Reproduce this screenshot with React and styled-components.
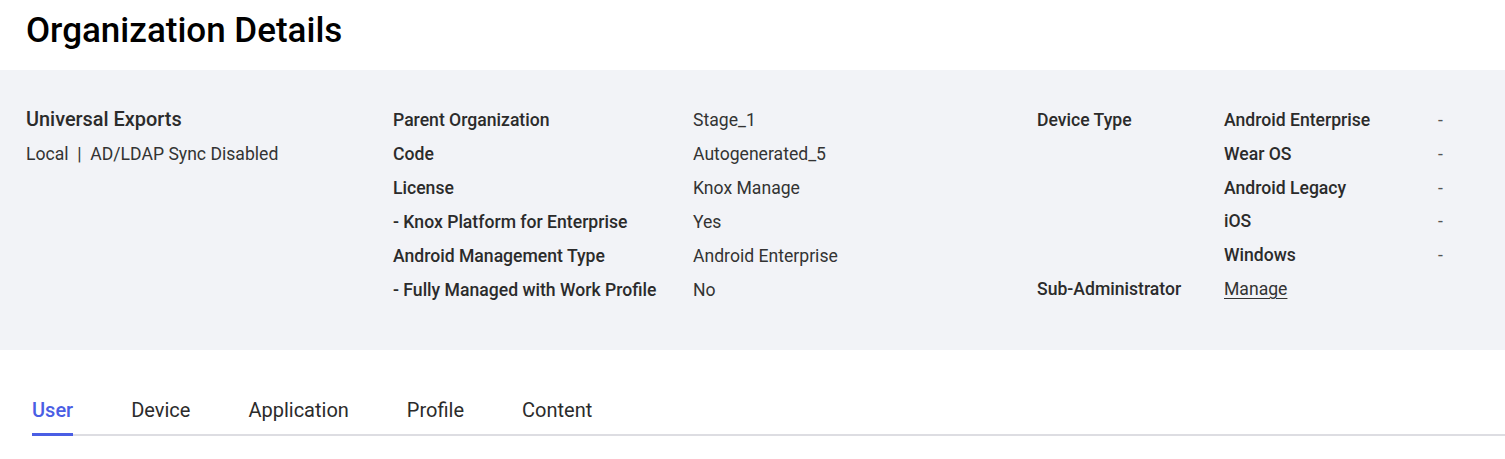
import React from "react";
import styled, { createGlobalStyle } from "styled-components";

const GlobalStyle = createGlobalStyle`
  body {
    margin: 0;
    background: #fff;
    font-family: Roboto, "Noto Sans", sans-serif;
    color: #2b2b2b;
  }
`;

const details = [
  ["Parent Organization", "Stage_1"],
  ["Code", "Autogenerated_5"],
  ["License", "Knox Manage"],
  ["- Knox Platform for Enterprise", "Yes"],
  ["Android Management Type", "Android Enterprise"],
  ["- Fully Managed with Work Profile", "No"],
];

const deviceTypes = ["Android Enterprise", "Wear OS", "Android Legacy", "iOS", "Windows"];

const tabs = ["User", "Device", "Application", "Profile", "Content"];

function App() {
  const [active, setActive] = React.useState(0);

  return (
    <Page>
      <GlobalStyle />
      <Header>
        <Title>Organization Details</Title>
      </Header>

      <Summary>
        <OrgBlock>
          <OrgName>Universal Exports</OrgName>
          <OrgMeta>Local&nbsp;&nbsp;|&nbsp;&nbsp;AD/LDAP Sync Disabled</OrgMeta>
        </OrgBlock>

        <InfoGrid>
          {details.map(([label, value]) => (
            <React.Fragment key={label}>
              <Label>{label}</Label>
              <Value>{value}</Value>
            </React.Fragment>
          ))}
        </InfoGrid>

        <DeviceGrid>
          <Label span={5}>Device Type</Label>
          {deviceTypes.map((type) => (
            <React.Fragment key={type}>
              <Label>{type}</Label>
              <Dash>-</Dash>
            </React.Fragment>
          ))}
          <Label>Sub-Administrator</Label>
          <ManageLink href="#">Manage</ManageLink>
        </DeviceGrid>
      </Summary>

      <TabList>
        {tabs.map((tab, i) => (
          <Tab key={tab} $active={i === active} onClick={() => setActive(i)}>
            {tab}
          </Tab>
        ))}
      </TabList>
    </Page>
  );
}

// css styles
const Page = styled.div`
  width: 1505px;
  min-height: 459px;
`;

const Header = styled.div`
  height: 70px;
  padding: 10px 26px 0;
  box-sizing: border-box;
`;

const Title = styled.h1`
  margin: 0;
  font-size: 35px;
  line-height: 42px;
  font-weight: 500;
  color: #000;
`;

const Summary = styled.div`
  display: flex;
  align-items: flex-start;
  height: 280px;
  box-sizing: border-box;
  padding: 33px 0 0 26px;
  background: #f2f3f7;
`;

const OrgBlock = styled.div`
  width: 367px;
`;

const OrgName = styled.div`
  font-size: 19.9px;
  font-weight: 500;
  line-height: 34px;
  color: #2b2b2b;
`;

const OrgMeta = styled.div`
  font-size: 17.6px;
  line-height: 34px;
  color: #333;
`;

const InfoGrid = styled.div`
  display: grid;
  grid-template-columns: 300px 344px;
  grid-auto-rows: 34px;
`;

const DeviceGrid = styled.div`
  display: grid;
  grid-template-columns: 187px 214px 40px;
  grid-auto-rows: 33.8px;
`;

const Cell = styled.div`
  font-size: 17.6px;
  line-height: 34px;
  white-space: nowrap;
`;

const Label = styled(Cell)`
  font-weight: 500;
  color: #2b2b2b;
  grid-row: ${(props) => (props.span ? `span ${props.span}` : "auto")};
`;

const Value = styled(Cell)`
  color: #333;
`;

const Dash = styled(Cell)`
  color: #555;
`;

const ManageLink = styled(Cell).attrs({ as: "a" })`
  grid-column: 2;
  color: #333;
  text-decoration: underline;
  text-underline-offset: 3px;
`;

const TabList = styled.div`
  display: flex;
  gap: 58px;
  margin: 47px 0 0 32px;
  border-bottom: 2px solid #dddde2;
`;

const Tab = styled.div`
  font-size: 20px;
  line-height: 26px;
  padding-bottom: 10px;
  margin-bottom: -2px;
  cursor: pointer;
  color: ${(props) => (props.$active ? "#4a5ee4" : "#2b2b2b")};
  font-weight: ${(props) => (props.$active ? 500 : 400)};
  border-bottom: 3px solid ${(props) => (props.$active ? "#4a5ee4" : "transparent")};
`;

export default App;
